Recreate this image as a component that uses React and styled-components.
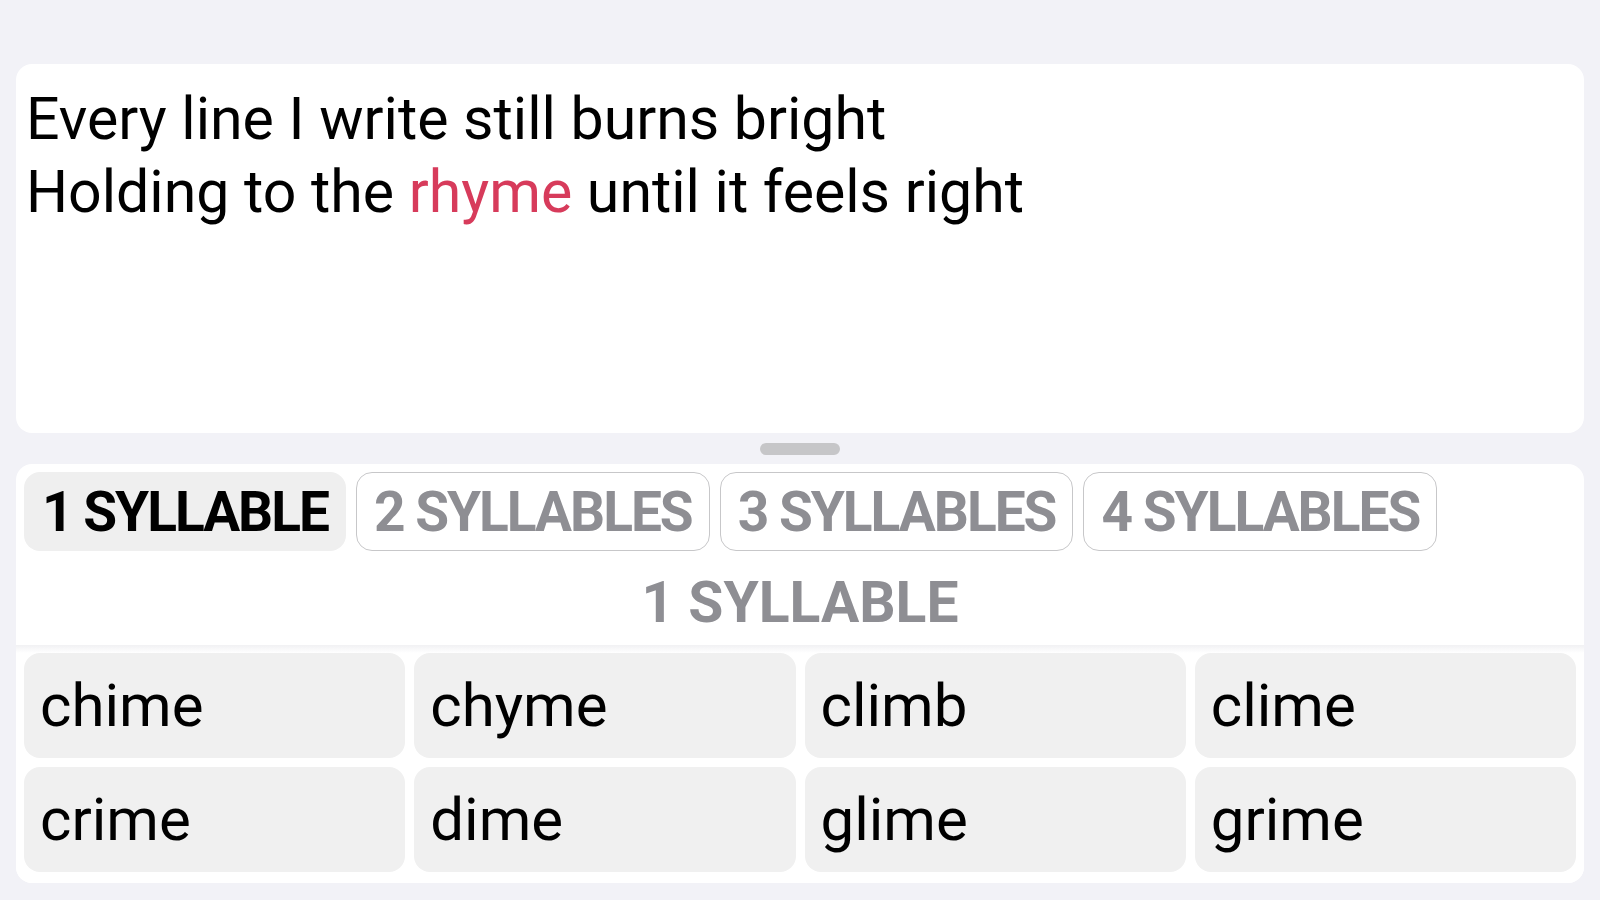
import React, { useState } from "react";
import styled, { createGlobalStyle } from "styled-components";

const GlobalStyle = createGlobalStyle`
  html, body {
    margin: 0;
    padding: 0;
    background: #f2f2f7;
  }
  body {
    font-family: Roboto, "Liberation Sans", sans-serif;
  }
`;

const tabs = ["1 SYLLABLE", "2 SYLLABLES", "3 SYLLABLES", "4 SYLLABLES"];

const words = ["chime", "chyme", "climb", "clime", "crime", "dime", "glime", "grime"];

export default function App() {
  const [active, setActive] = useState(0);

  return (
    <Page>
      <GlobalStyle />
      <Editor>
        <Line>Every line I write still burns bright</Line>
        <Line>
          Holding to the <Highlight>rhyme</Highlight> until it feels right
        </Line>
      </Editor>
      <HandleRow>
        <Handle />
      </HandleRow>
      <Sheet>
        <TabRow>
          {tabs.map((label, index) => (
            <Tab
              key={label}
              $active={index === active}
              onClick={() => setActive(index)}
            >
              {label}
            </Tab>
          ))}
        </TabRow>
        <SectionTitle>{tabs[active]}</SectionTitle>
        <WordGrid>
          {words.map((word) => (
            <WordCell key={word}>{word}</WordCell>
          ))}
        </WordGrid>
      </Sheet>
    </Page>
  );
}

const Page = styled.div`
  padding: 64px 16px 17px;
  min-height: 900px;
  box-sizing: border-box;
`;

const Editor = styled.div`
  height: 369px;
  box-sizing: border-box;
  background: #ffffff;
  border-radius: 16px;
  padding: 18px 10px 0;
  color: #000000;
  font-size: 59px;
  line-height: 73px;
`;

const Line = styled.div`
  white-space: nowrap;
`;

const Highlight = styled.span`
  color: #d73b5b;
`;

const HandleRow = styled.div`
  display: flex;
  justify-content: center;
  padding: 10px 0 9px;
`;

const Handle = styled.div`
  width: 80px;
  height: 12px;
  border-radius: 6px;
  background: #c6c6c8;
`;

const Sheet = styled.div`
  background: #ffffff;
  border-radius: 16px;
  overflow: hidden;
`;

const TabRow = styled.div`
  display: flex;
  gap: 10px;
  padding: 8px 8px 0;
`;

const Tab = styled.button`
  height: 79px;
  box-sizing: border-box;
  padding: 0 17px;
  border-radius: 16px;
  border: 1.5px solid ${(p) => (p.$active ? "transparent" : "#c7c7c9")};
  background: ${(p) => (p.$active ? "#efefef" : "#ffffff")};
  color: ${(p) => (p.$active ? "#000000" : "#8e8e93")};
  font-family: Roboto, "Liberation Sans", sans-serif;
  font-weight: 700;
  font-size: 55px;
  letter-spacing: -2px;
  white-space: nowrap;
  cursor: pointer;
`;

const SectionTitle = styled.div`
  padding-top: 10px;
  height: 84px;
  line-height: 84px;
  text-align: center;
  color: #8e8e93;
  font-weight: 700;
  font-size: 57px;
`;

const WordGrid = styled.div`
  display: grid;
  grid-template-columns: repeat(4, 1fr);
  gap: 9px;
  padding: 8px 8px 11px;
  background: linear-gradient(#f1f1f3, #ffffff 8px);
`;

const WordCell = styled.div`
  height: 105px;
  display: flex;
  align-items: center;
  padding: 0 16px;
  border-radius: 16px;
  background: #f0f0f0;
  color: #000000;
  font-size: 60px;
  line-height: 1;
`;
